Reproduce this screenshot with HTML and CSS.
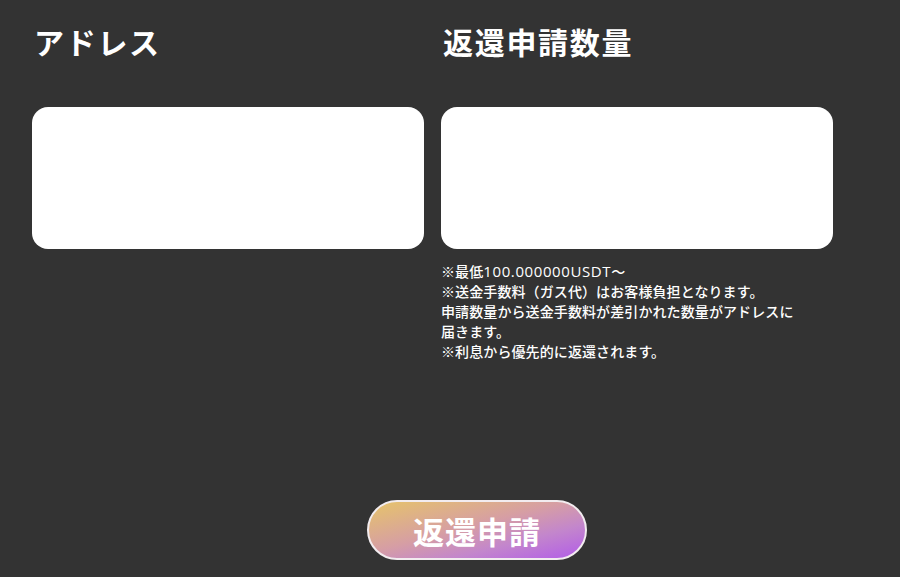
FILE: index.html
```html
<!DOCTYPE html>
<html lang="ja">
<head>
  <meta charset="UTF-8" />
  <meta name="viewport" content="width=device-width, initial-scale=1.0" />
  <title>返還申請</title>
  <link rel="stylesheet" href="styles.css">
</head>
<body>
  <div class="container">
    <div class="columns">
      <!-- Address -->
      <div class="field">
        <h2 class="field-title">アドレス</h2>
        <input type="text" class="field-input" />
      </div>
      <!-- Amount -->
      <div class="field">
        <h2 class="field-title">返還申請数量</h2>
        <input type="text" class="field-input" />
        <p class="notes">
          ※最低<span class="latin">100.000000USDT</span>〜<br>
          ※送金手数料（ガス代）はお客様負担となります。<br>
          申請数量から送金手数料が差引かれた数量がアドレスに届きます。<br>
          ※利息から優先的に返還されます。
        </p>
      </div>
    </div>
    <div class="actions">
      <button class="submit-button">返還申請</button>
    </div>
  </div>
</body>
</html>
```

FILE: styles.css
```css
body {
  margin: 0;
  background-color: #333333;
  color: #ffffff;
  font-family: "Noto Sans CJK JP", "Noto Sans", sans-serif;
}
.container {
  padding: 19px 32px 0;
}
.columns {
  display: flex;
  gap: 17px;
}
.field {
  width: 392px;
}
.field-title {
  margin: 0 0 43px 2px;
  font-size: 30px;
  font-weight: 700;
  line-height: 45px;
  letter-spacing: 1.7px;
}
.field-input {
  display: block;
  width: 100%;
  height: 142px;
  box-sizing: border-box;
  border: none;
  border-radius: 16px;
  background-color: #ffffff;
}
.notes {
  max-width: 362px;
  margin: 12px 0 0;
  font-size: 14px;
  font-weight: 500;
  line-height: 20px;
  letter-spacing: 0.1px;
}
.latin {
  font-family: "Open Sans", sans-serif;
  font-size: 15px;
  font-weight: 500;
  letter-spacing: 0.6px;
}
.actions {
  display: flex;
  padding-top: 139px;
  padding-left: 335px;
}
.submit-button {
  width: 220px;
  height: 60px;
  border: 2px solid #f2ecef;
  border-radius: 30px;
  background: linear-gradient(to bottom right, #e6c46a 0%, #d69ea4 45%, #c386cc 70%, #b25ce8 100%);
  color: #ffffff;
  font-family: inherit;
  font-size: 31px;
  font-weight: 700;
  letter-spacing: 1px;
  cursor: pointer;
}
```
